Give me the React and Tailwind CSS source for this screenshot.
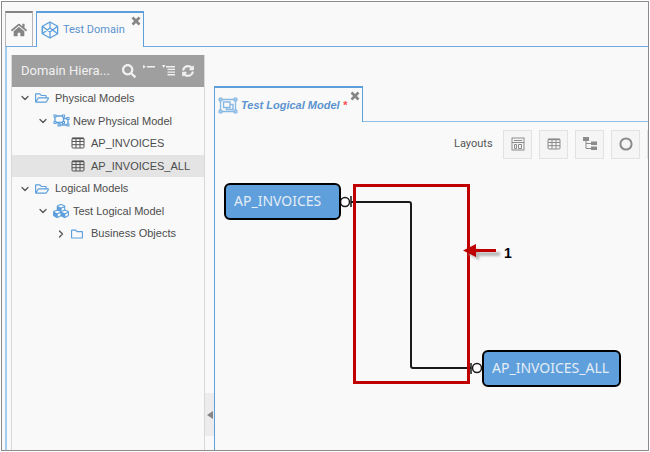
import React from "react";
import {
  FaHome, FaSearch, FaRegFolderOpen, FaRegFolder,
  FaCubes, FaSitemap, FaSyncAlt,
} from "react-icons/fa";
import { ChevronDown, ChevronRight } from "lucide-react";

function HexIcon() {
  return (
    <svg viewBox="0 0 18 18" className="h-[18px] w-[18px] shrink-0" fill="none" stroke="#5c9fdc" strokeWidth="1.3" strokeLinejoin="round">
      <path d="M9 1 16.6 5.2V12.8L9 17 1.4 12.8V5.2Z" />
      <path d="M1.4 5.2 9 11 16.6 5.2M1.4 12.8 9 7 16.6 12.8M9 1V7M9 17V11M1.4 5.2V12.8" />
    </svg>
  );
}

function CloseIcon() {
  return (
    <svg viewBox="0 0 10 10" className="h-2.5 w-2.5" fill="none" stroke="#858585" strokeWidth="2.6">
      <path d="M1.500 1.500 8.500 8.500M8.500 1.500 1.500 8.500" />
    </svg>
  );
}

function TableIcon({ className }) {
  return (
    <svg viewBox="0 0 14 12" className={className} fill="none" stroke="currentColor">
      <rect x="1" y="1" width="12" height="10" rx="1" />
      <path d="M1 1.5H13" strokeWidth="1.4" />
      <path d="M1 4.5H13M1 7.7H13M5 1V11M9 1V11" />
    </svg>
  );
}

function PhysicalIcon() {
  return (
    <svg viewBox="0 0 17 13" className="h-[13px] w-[17px] shrink-0" fill="none" stroke="#5c9fdc">
      <path d="M2 2H10.500V8.500H2ZM10.500 4.500H15V11H6V8.500" strokeWidth="1.3" />
      <path fill="#5c9fdc" stroke="none" d="M.5 .5h3v3h-3zM9 .5h3v3h-3zM.5 7h3v3h-3zM9 7h3v3h-3zM13.500 3h3v3h-3zM13.500 9.500h3v3h-3zM4.500 9.500h3v3h-3z" />
      <path fill="#fff" stroke="none" d="M1.500 1.500h1v1h-1zM10 1.500h1v1h-1zM1.500 8h1v1h-1zM10 8h1v1h-1zM14.500 4h1v1h-1zM14.500 10.500h1v1h-1zM5.500 10.500h1v1h-1z" />
    </svg>
  );
}

function GroupIcon() {
  return (
    <svg viewBox="0 0 20 17" className="h-[17px] w-5 shrink-0" fill="none" stroke="#86b8e4">
      <path d="M2.500 2.500H17.500V14.500H2.500Z" strokeWidth="1.3" />
      <path d="M5.500 5H12V10.500H5.500ZM12 7.500H15V12.500H8.500V10.500" strokeWidth="1.4" />
      <path fill="#a9cdee" strokeWidth="1" d="M1 1h3v3h-3zM16 1h3v3h-3zM1 13h3v3h-3zM16 13h3v3h-3z" />
    </svg>
  );
}

function CollapseIcon() {
  return (
    <svg viewBox="0 0 14 14" className="h-3.5 w-3.5" fill="#f1f1f1">
      <path d="M1 1 4 2.700 1 4.500ZM5 2H13V3.500H5Z" />
    </svg>
  );
}

function ExpandIcon() {
  return (
    <svg viewBox="0 0 14 14" className="h-3.5 w-3.5" fill="#f1f1f1">
      <path d="M0 1 3.500 1 1.700 4ZM4 2H13V3.400H4ZM5.500 4.700H13V6.100H5.500ZM5.500 7.400H13V8.800H5.500ZM5.500 10.100H13V11.500H5.500Z" />
    </svg>
  );
}

function DashboardIcon() {
  return (
    <svg viewBox="0 0 14 14" className="h-3.5 w-3.5" fill="none" stroke="currentColor">
      <rect x="1" y="1" width="12" height="12" />
      <path d="M3 3.500H11M1 5.500H13" />
      <path d="M3.500 7.500H5.500V11.500H3.500ZM7.500 7.500H10.500V11.500H7.500Z" />
    </svg>
  );
}

function TreeIcon() {
  return (
    <svg viewBox="0 0 14 14" className="h-3.5 w-3.5" fill="currentColor">
      <path d="M0 0H6V4H0ZM8 4.500H14V8H8ZM8 9.500H14V13H8Z" />
      <path d="M3 4V11.500H8M3 6.500H8" fill="none" stroke="currentColor" />
    </svg>
  );
}

function CircleIcon() {
  return (
    <svg viewBox="0 0 14 14" className="h-3.5 w-3.5" fill="none" stroke="currentColor" strokeWidth="2">
      <circle cx="7" cy="7" r="5.600" />
    </svg>
  );
}

const folderOpen = <FaRegFolderOpen className="h-3.5 w-3.5 shrink-0 text-[#5c9fdc]" />;
const table = <TableIcon className="h-3 w-3.5 shrink-0 text-[#555]" />;

const rows = [
  { label: "Physical Models", pad: "pl-[7px]", open: true, icon: folderOpen },
  { label: "New Physical Model", pad: "pl-[25px]", open: true, icon: <PhysicalIcon /> },
  { label: "AP_INVOICES", pad: "pl-[43px]", leaf: true, icon: table },
  { label: "AP_INVOICES_ALL", pad: "pl-[43px]", leaf: true, icon: table, selected: true },
  { label: "Logical Models", pad: "pl-[7px]", open: true, icon: folderOpen },
  { label: "Test Logical Model", pad: "pl-[25px]", open: true, icon: <FaCubes className="h-4 w-4 shrink-0 text-[#5c9fdc]" /> },
  { label: "Business Objects", pad: "pl-[43px]", icon: <FaRegFolder className="h-3 w-3 shrink-0 text-[#5c9fdc]" /> },
];

function TreeRow({ row }) {
  const Chevron = row.open ? ChevronDown : ChevronRight;
  return (
    <li className={`flex items-center ${row.pad} ${row.selected ? "bg-[#e4e4e4]" : ""}`}>
      <span className="flex w-4 shrink-0 items-center">
        {!row.leaf && <Chevron className="h-3 w-3 text-[#555]" strokeWidth={2.5} />}
      </span>
      <span className="flex w-5 shrink-0 items-center">{row.icon}</span>
      <span className="whitespace-nowrap">{row.label}</span>
    </li>
  );
}

const layouts = [
  ["Dashboard layout", <DashboardIcon />],
  ["Grid layout", <TableIcon className="h-3 w-3.5" />],
  ["Tree layout", <TreeIcon />],
  ["Circle layout", <CircleIcon />],
  ["Hierarchy layout", <FaSitemap className="h-3.5 w-3.5" />],
];

function Sidebar() {
  return (
    <aside className="mt-2 flex w-[194px] shrink-0 flex-col border-x border-[#d8d8d8]">
      <header className="flex h-8 items-center bg-[#9f9f9f] pl-[9px] pr-2.5 text-[#f1f1f1]">
        <h2 className="flex-1 whitespace-nowrap font-[Roboto,sans-serif] text-[13px]">Domain Hiera...</h2>
        <div className="flex items-center gap-1.5">
          <button aria-label="Search"><FaSearch className="h-3.5 w-3.5" /></button>
          <button aria-label="Collapse all"><CollapseIcon /></button>
          <button aria-label="Expand all"><ExpandIcon /></button>
          <button aria-label="Refresh"><FaSyncAlt className="h-3 w-3" stroke="#f1f1f1" strokeWidth="20" /></button>
        </div>
      </header>
      <ul className="grid h-[158px] grid-rows-7 text-[11px] text-[#4c4c4c]">
        {rows.map((row) => <TreeRow key={row.label} row={row} />)}
      </ul>
    </aside>
  );
}

function Canvas() {
  return (
    <div className="relative flex-1 overflow-hidden font-['Noto_Sans',sans-serif] text-[14px] text-[#e4edf6]">
      <svg className="absolute left-0 top-0 h-[240px] w-[420px]" fill="none" stroke="#1a1a1a">
        <path d="M136 36H194Q196 36 196 38V200Q196 202 198 202H256" strokeWidth="2" />
        <path d="M136 30V41M256 197V208" strokeWidth="1.500" />
        <circle cx="130" cy="36" r="4.500" fill="#fff" strokeWidth="1.500" />
        <circle cx="262" cy="202" r="4.500" fill="#fff" strokeWidth="1.500" />
      </svg>
      <div className="absolute left-[9px] top-[17px] flex h-[37px] w-[117px] items-center rounded-md border-2 border-black bg-[#5f9fdc] pb-0.5 pl-2">AP_INVOICES</div>
      <div className="absolute left-[267px] top-[184px] flex h-[37px] w-[139px] items-center rounded-md border-2 border-black bg-[#5f9fdc] pb-0.5 pl-2">AP_INVOICES_ALL</div>
      <div className="absolute left-[138px] top-[18px] h-[200px] w-[117px] border-3 border-[#c00000]" />
      <svg viewBox="0 0 40 20" className="absolute left-[247px] top-[76px] h-5 w-10">
        <path d="M6 12 17 6V10H38V14H17V18Z" fill="#b8b8b8" className="blur-[1px]" />
        <path d="M1 8.500 14 2V7H34V10H14V15Z" fill="#c00000" />
      </svg>
      <span className="absolute left-[289px] top-[77px] font-['Liberation_Sans',Arial,sans-serif] text-[14px] leading-5 font-bold text-black">1</span>
    </div>
  );
}

export default function App() {
  return (
    <div className="flex h-screen w-full flex-col bg-white p-px font-['Liberation_Sans',Arial,sans-serif]">
      <div className="flex min-h-0 flex-1 flex-col overflow-hidden border border-[#8c8c8c] bg-[#f9f9f9] pl-[3px] pt-[9px]">
        <nav className="flex h-9 shrink-0 font-[Roboto,sans-serif] text-[11px] text-[#5b93cf]">
          <button aria-label="Home" className="flex w-7 items-center justify-center border-x border-t-2 border-b border-[#b4b4b4] border-t-[#858585] border-b-[#6eabe2] text-[#858585]">
            <FaHome className="h-4 w-4" />
          </button>
          <span className="w-[3px] border-b border-[#6eabe2]" />
          <div className="flex w-[108px] items-center border-x border-t-2 border-[#5c9fdc] pl-1">
            <HexIcon />
            <span className="flex-1 whitespace-nowrap pl-1">Test Domain</span>
            <button aria-label="Close Test Domain" className="mr-0.5 self-start pt-[3px]"><CloseIcon /></button>
          </div>
          <span className="flex-1 border-b border-[#6eabe2]" />
        </nav>
        <div className="flex min-h-0 flex-1 border-l-2 border-[#a4ccef] pl-1">
          <Sidebar />
          <div className="flex w-[9px] shrink-0 flex-col justify-end pb-[14px]">
            <button aria-label="Collapse panel" className="flex h-[43px] items-center justify-center bg-[#ececec]">
              <svg viewBox="0 0 6 8" className="h-2 w-1.5" fill="#858585"><path d="M6 0V8L0 4Z" /></svg>
            </button>
          </div>
          <main className="flex min-w-0 flex-1 flex-col pt-[39px]">
            <div className="flex h-9 shrink-0 text-[11px]">
              <div className="flex w-[149px] items-center border-x border-t-2 border-[#5c9fdc] pl-[3px]">
                <GroupIcon />
                <span className="flex-1 whitespace-nowrap pl-[3px] font-bold text-[#5b93cf] italic">Test Logical Model <span className="text-[#ff4d4d]">*</span></span>
                <button aria-label="Close Test Logical Model" className="mr-0.5 self-start pt-[3px]"><CloseIcon /></button>
              </div>
              <span className="flex-1 border-b border-[#8fbfe9]" />
            </div>
            <div className="flex min-h-0 flex-1 flex-col border-l border-[#5c9fdc]">
              <div className="flex h-11 shrink-0 items-center overflow-hidden pl-[239px]">
                <span className="w-[49px] shrink-0 font-[Roboto,sans-serif] text-[11px] text-[#555]">Layouts</span>
                <div className="flex gap-[7px]">
                  {layouts.map(([label, icon]) => (
                    <button key={label} aria-label={label} className="flex h-[29px] w-[29px] shrink-0 items-center justify-center border border-[#e2e2e2] bg-[#f5f5f5] text-[#8b8b8b]">{icon}</button>
                  ))}
                </div>
              </div>
              <Canvas />
            </div>
          </main>
        </div>
      </div>
    </div>
  );
}
